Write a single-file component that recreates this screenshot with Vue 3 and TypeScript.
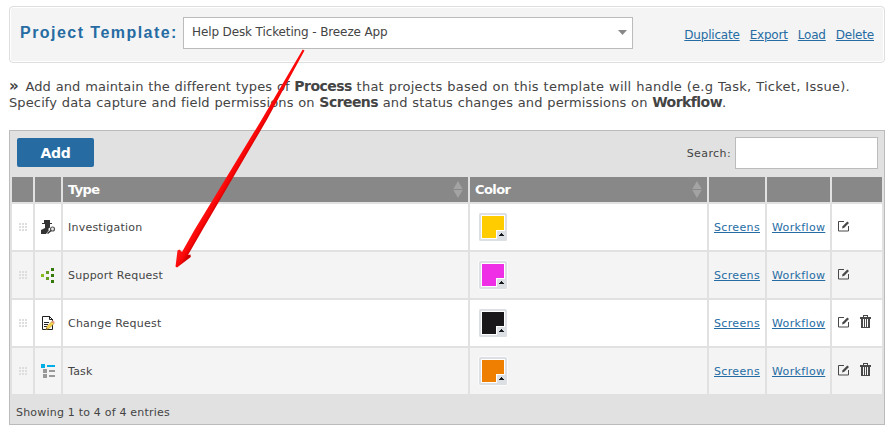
<script setup lang="ts">
interface ProcessType {
  name: string
  icon: 'agent' | 'nodes' | 'document' | 'list'
  color: string
  removable: boolean
}

const actions: string[] = ['Duplicate', 'Export', 'Load', 'Delete']

const rows: ProcessType[] = [
  { name: 'Investigation', icon: 'agent', color: '#ffcc00', removable: false },
  { name: 'Support Request', icon: 'nodes', color: '#ef2fe6', removable: false },
  { name: 'Change Request', icon: 'document', color: '#1a171b', removable: true },
  { name: 'Task', icon: 'list', color: '#ee7f00', removable: true },
]
</script>

<template>
  <main class="page">
    <header class="template-bar">
      <h1 class="title">Project Template:</h1>
      <div class="select">
        <span>Help Desk Ticketing - Breeze App</span>
        <svg class="caret" width="9" height="5" viewBox="0 0 9 5"><path d="M0 0h9L4.500 5z" fill="#888" /></svg>
      </div>
      <nav class="actions">
        <a v-for="action in actions" :key="action" class="link">{{ action }}</a>
      </nav>
    </header>

    <p class="intro">
      <span class="line"><b class="marker">»</b> Add and maintain the different types of <b>Process</b><span class="loose"> that projects based on this template will handle (e.g Task, Ticket, Issue).</span></span>
      <span class="line">Specify data capture and field permissions on <b>Screens</b> and status changes and permissions on <b>Workflow</b>.</span>
    </p>

    <section class="panel">
      <div class="toolbar">
        <button class="add" type="button">Add</button>
        <label class="search">Search:<input class="search-input" type="text" /></label>
      </div>

      <div class="grid">
        <div class="th"></div>
        <div class="th"></div>
        <div class="th sortable">
          <span>Type</span>
          <svg width="10" height="17" viewBox="0 0 10 17"><path d="M5 0l4.700 8H.3zM.3 9h9.400L5 17z" fill="#a3a3a3" /></svg>
        </div>
        <div class="th sortable">
          <span>Color</span>
          <svg width="10" height="17" viewBox="0 0 10 17"><path d="M5 0l4.700 8H.3zM.3 9h9.400L5 17z" fill="#a3a3a3" /></svg>
        </div>
        <div class="th"></div>
        <div class="th"></div>
        <div class="th"></div>

        <template v-for="(row, index) in rows" :key="row.name">
          <div class="td center" :class="{ alt: index % 2 === 1 }">
            <svg width="8" height="8" viewBox="0 0 8 8" shape-rendering="crispEdges">
              <path d="M0 0h2v2H0zM3 0h2v2H3zM6 0h2v2H6zM0 3h2v2H0zM3 3h2v2H3zM6 3h2v2H6zM0 6h2v2H0zM3 6h2v2H3zM6 6h2v2H6z" fill="#dedede" />
            </svg>
          </div>
          <div class="td center" :class="{ alt: index % 2 === 1 }">
            <svg width="16" height="16" viewBox="0 0 16 16">
              <g v-if="row.icon === 'agent'">
                <path d="M4 1h6v3h2v1h-2v3.500L8 10l1 1-3 4H1v-4l4-2V5H2V4h2z" fill="#333" />
                <circle cx="12.500" cy="10" r="2" fill="#eee" stroke="#555" stroke-width="1.200" />
                <path d="M11 11.500l-3.500 3" stroke="#333" stroke-width="1.600" />
              </g>
              <g v-else-if="row.icon === 'nodes'" shape-rendering="crispEdges">
                <path d="M1 7h3v3H1z" fill="#85b91c" />
                <path d="M6 4h3v3H6zM6 10h3v3H6z" fill="#669b24" />
                <path d="M11 1h3v3h-3zM11 7h3v3h-3zM11 13h3v3h-3z" fill="#357908" />
              </g>
              <g v-else-if="row.icon === 'document'">
                <path d="M2.500 1.500h7l3 3v10h-10z" fill="#fff" stroke="#202020" />
                <path d="M9.500 1v3.500h3.500" fill="none" stroke="#202020" />
                <path d="M4 7.500h5M4 9.500h4M4 11.500h3" stroke="#202020" />
                <path d="M6 14.500l1-3 5-5 2 2-5 5z" fill="#f5d74e" stroke="#b78b2c" stroke-width=".7" />
                <path d="M11.500 6.500l1.300-1.300 2 2-1.300 1.300z" fill="#e58f89" />
                <path d="M6 14.500l.5-1.500 1 1z" fill="#403020" />
              </g>
              <g v-else shape-rendering="crispEdges">
                <path d="M1 1h4v4H1zM7 2h8v2H7z" fill="#00aee6" />
                <path d="M3 6h4v4H3zM9 7h6v2H9zM3 11h4v4H3zM9 12h6v2H9z" fill="#999" />
              </g>
            </svg>
          </div>
          <div class="td name" :class="{ alt: index % 2 === 1 }">{{ row.name }}</div>
          <div class="td color" :class="{ alt: index % 2 === 1 }">
            <svg width="30" height="30" viewBox="0 0 30 30">
              <rect width="30" height="30" rx="3" fill="#fff" fill-opacity=".6" />
              <rect x="1" y="1" width="28" height="28" rx="1.500" fill="#dce0e5" />
              <path d="M3 3h24v24H3z" fill="#fff" />
              <path d="M4 4h22v22H4z" :fill="row.color" />
              <path d="M18 18h9v9h-9z" fill="#fff" />
              <path d="M19 19h8v8h-8z" fill="#dce0e5" />
              <path d="M23 21h1v1h1v1h1v1h-5v-1h1v-1h1z" fill="#181b20" />
            </svg>
          </div>
          <div class="td link-cell" :class="{ alt: index % 2 === 1 }"><a class="link">Screens</a></div>
          <div class="td link-cell" :class="{ alt: index % 2 === 1 }"><a class="link">Workflow</a></div>
          <div class="td tools" :class="{ alt: index % 2 === 1 }">
            <svg width="11" height="11" viewBox="0 0 11 11">
              <path d="M6 .5H.5v9.500h10V5" fill="none" stroke="#484848" />
              <path d="M4 7.500l.6-2.200L9.300.6 11 2.100 6.300 6.800z" fill="#484848" />
            </svg>
            <svg v-if="row.removable" class="trash" width="11" height="13" viewBox="0 0 11 13">
              <path d="M3 0h5v2h3v2h-1v9H1V4H0V2h3zM4 1v1h3V1zM3 4v8h1V4zM5 4v8h1V4zM7 4v8h1V4z" fill="#484848" fill-rule="evenodd" />
            </svg>
          </div>
        </template>
      </div>

      <div class="summary">Showing 1 to 4 of 4 entries</div>
    </section>

    <svg class="pointer" width="140" height="225" viewBox="0 0 140 225">
      <defs>
        <linearGradient id="shaft" gradientUnits="userSpaceOnUse" x1="68" y1="108" x2="75.500" y2="112.400">
          <stop offset="0" stop-color="#ff1414" />
          <stop offset=".6" stop-color="#fa0606" />
          <stop offset="1" stop-color="#cc0000" />
        </linearGradient>
      </defs>
      <path d="M132.700 3.500L134.500 4.500 97 73.500 32.400 184 18 209 20.500 208.500 20.800 211 7 221.500 5.500 220.500 7.500 204.500 9.500 203.500 12 206 24.400 184 92 73z" fill="url(#shaft)" />
    </svg>
  </main>
</template>

<style>
body {
  background: #fff;
}
</style>

<style scoped>
.page {
  position: relative;
  box-sizing: border-box;
  width: 894px;
  height: 435px;
  padding: 6px 9px 0;
  overflow: hidden;
  font-family: Verdana, "DejaVu Sans", sans-serif;
  font-size: 11px;
  letter-spacing: 0.23px;
  color: #444;
}

.page * {
  box-sizing: border-box;
}

.page svg {
  display: block;
  flex: none;
}

.template-bar {
  display: flex;
  align-items: flex-start;
  height: 57px;
  padding: 10px 10px 0;
  border: 1px solid #dedede;
  border-radius: 4px;
  box-shadow: inset 0 0 0 1px #fff;
  background: #f4f4f4;
}

.title {
  width: 163px;
  margin: 6px 0 0;
  font-family: Arial, "Liberation Sans", sans-serif;
  font-size: 16px;
  line-height: 20px;
  letter-spacing: 1.46px;
  white-space: nowrap;
  color: #266ca3;
}

.select {
  display: flex;
  align-items: center;
  justify-content: space-between;
  width: 450px;
  height: 32px;
  padding: 0 5px 3px 8px;
  border: 1px solid #bbb;
  background: #fff;
  font-size: 12px;
  letter-spacing: -0.12px;
}

.caret {
  margin-top: 1px;
}

.actions {
  display: flex;
  gap: 10px;
  margin: 10px 0 0 auto;
  font-size: 12px;
  line-height: 16px;
  letter-spacing: -0.2px;
}

.link {
  color: #266ca3;
  text-decoration: underline;
}

.intro {
  margin: 16px 0 0;
  font-size: 13px;
  line-height: 16px;
  letter-spacing: 0.12px;
  word-spacing: 0.44px;
  white-space: nowrap;
}

.intro b {
  font-size: 14px;
  line-height: 1;
  letter-spacing: -0.55px;
}

.intro .marker {
  margin-right: 2.6px;
  font-size: 15px;
}

.loose {
  letter-spacing: 0.24px;
}

.line {
  display: block;
  height: 16px;
}

.panel {
  height: 295px;
  margin-top: 19px;
  padding: 6px 2px 0;
  border: 1px solid #bbb;
  background: #e1e1e1;
}

.toolbar {
  display: flex;
  align-items: flex-start;
  justify-content: space-between;
  height: 40px;
  padding: 0 4px 0 5px;
}

.add {
  width: 77px;
  height: 29px;
  margin-top: 1px;
  padding: 1px 0 0;
  border: 0;
  border-radius: 2px;
  background: #266ca3;
  color: #fff;
  font: bold 14px/28px Verdana, "DejaVu Sans", sans-serif;
  letter-spacing: -0.3px;
}

.search {
  display: flex;
  align-items: center;
  gap: 4px;
  letter-spacing: 0.4px;
}

.search-input {
  width: 143px;
  height: 32px;
  border: 1px solid #bbb;
  background: #fff;
}

.grid {
  display: grid;
  grid-template-columns: 21px 26px 405px 237px 56px 63px 50px;
  grid-template-rows: 25px repeat(4, 46px);
  gap: 2px;
}

.th {
  display: flex;
  align-items: center;
  background: #888;
  color: #fff;
  font-size: 13px;
  font-weight: bold;
  letter-spacing: -0.6px;
}

.sortable {
  justify-content: space-between;
  padding: 0 5px;
}

.td {
  display: flex;
  align-items: center;
  background: #fff;
}

.alt {
  background: #f4f4f4;
}

.center {
  justify-content: center;
}

.name,
.link-cell {
  padding-left: 5px;
}

.link-cell {
  letter-spacing: 0.35px;
}

.color {
  padding-left: 8px;
}

.tools {
  align-items: flex-start;
  gap: 11px;
  padding: 17px 0 0 6px;
}

.trash {
  margin-top: -2px;
}

.summary {
  padding: 12px 4px;
  line-height: 14px;
  letter-spacing: 0.2px;
}

.pointer {
  position: absolute;
  left: 170px;
  top: 46px;
}
</style>
